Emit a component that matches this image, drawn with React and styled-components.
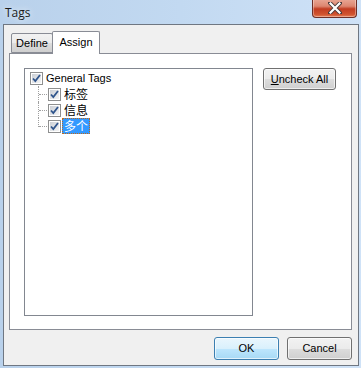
import React from "react";
import styled, { createGlobalStyle } from "styled-components";

const Global = createGlobalStyle`
  html, body { margin: 0; padding: 0; }
  body { width: 361px; height: 368px; overflow: hidden; background: #c4daf1; }
`;

const Window = styled.div`
  width: 361px;
  height: 368px;
  box-sizing: border-box;
  display: flex;
  flex-direction: column;
  background: linear-gradient(to right, #b9d1eb 0%, #c2d9f1 50%, #cfe2f7 100%);
  font-family: "Liberation Sans", Arial, sans-serif;
  font-size: 11px;
  color: #000;
`;

const TitleBar = styled.div`
  height: 24px;
  flex-shrink: 0;
  display: flex;
  align-items: flex-start;
  justify-content: space-between;
  padding-left: 5px;
  padding-right: 4px;
  box-sizing: border-box;
`;

const Title = styled.div`
  font-family: "Open Sans", "Noto Sans", sans-serif;
  font-size: 12px;
  line-height: 14px;
  margin-top: 6px;
  color: #1b1b1b;
  text-shadow: 0 0 6px rgba(255, 255, 255, 0.9);
`;

const CloseButton = styled.div`
  width: 45px;
  height: 19px;
  margin-top: -1px;
  box-sizing: border-box;
  border: 1px solid #6d2f27;
  border-top: none;
  border-radius: 0 0 4px 4px;
  background: linear-gradient(to bottom, #e9a896 0%, #dd8670 40%, #c23d22 55%, #d0532f 85%, #e67e55 100%);
  box-shadow: inset 0 0 0 1px rgba(255, 255, 255, 0.35);
  display: flex;
  align-items: center;
  justify-content: center;
`;

const Client = styled.div`
  height: 342px;
  flex-shrink: 0;
  margin: 0 2px 2px 3px;
  border: 1px solid #6f7782;
  background: #f0f0f0;
  display: flex;
  flex-direction: column;
  padding: 6px 6px 5px 5px;
  box-sizing: border-box;
`;

const TabStrip = styled.div`
  height: 22px;
  flex-shrink: 0;
  display: flex;
  align-items: flex-end;
  padding-left: 2px;
  position: relative;
  z-index: 1;
`;

const Tab = styled.div`
  box-sizing: border-box;
  width: ${(p) => p.$w}px;
  height: ${(p) => (p.$active ? "23px" : "20px")};
  margin-bottom: ${(p) => (p.$active ? "-1px" : "0")};
  margin-left: ${(p) => (p.$active ? "-1px" : "0")};
  padding-top: ${(p) => (p.$active ? "3px" : "2px")};
  text-align: center;
  border: 1px solid #898c95;
  border-bottom: ${(p) => (p.$active ? "none" : "1px solid #898c95")};
  background: ${(p) =>
    p.$active ? "#ffffff" : "linear-gradient(to bottom, #f2f2f2 0%, #ebebeb 50%, #dddddd 51%, #cfcfcf 100%)"};
  border-radius: 2px 2px 0 0;
  line-height: 14px;
  position: relative;
  z-index: ${(p) => (p.$active ? 2 : 1)};
`;

const Panel = styled.div`
  height: 277px;
  flex-shrink: 0;
  box-sizing: border-box;
  border: 1px solid #898c95;
  background: #ffffff;
  display: flex;
  align-items: flex-start;
  padding: 14px 0 0 14px;
  gap: 10px;
`;

const TreeBox = styled.div`
  width: 229px;
  height: 248px;
  box-sizing: border-box;
  border: 1px solid #828790;
  background: #fff;
  padding: 1px 0 0 0;
`;

const Row = styled.div`
  height: 16px;
  display: flex;
  align-items: center;
  padding-left: ${(p) => (p.$child ? "13px" : "5px")};
`;

const Connector = styled.div`
  width: 10px;
  height: 16px;
  position: relative;
  align-self: stretch;
  &::before {
    content: "";
    position: absolute;
    left: 0;
    top: 0;
    height: ${(p) => (p.$last ? "9px" : "16px")};
    border-left: 1px dotted #a0a0a0;
  }
  &::after {
    content: "";
    position: absolute;
    left: 1px;
    top: 8px;
    width: 8px;
    border-top: 1px dotted #a0a0a0;
  }
`;

const Box = styled.div`
  width: 13px;
  height: 13px;
  box-sizing: border-box;
  border: 1px solid #8e8f8f;
  background: #fff;
  padding: 1px;
  display: flex;
  flex-shrink: 0;
`;

const BoxInner = styled.div`
  flex: 1;
  background: linear-gradient(135deg, #cbcfd5 0%, #e4e6e9 60%, #f4f4f4 100%);
  display: flex;
  align-items: center;
  justify-content: center;
`;

const Label = styled.div`
  margin-left: 1px;
  height: 16px;
  box-sizing: border-box;
  padding: 0 2px;
  line-height: 16px;
  font-family: ${(p) =>
    p.$cjk ? '"Noto Sans CJK SC", "Liberation Sans", sans-serif' : '"Liberation Sans", Arial, sans-serif'};
  font-size: ${(p) => (p.$cjk ? "12px" : "11px")};
  white-space: nowrap;
  background: ${(p) => (p.$selected ? "#3399ff" : "transparent")};
  color: ${(p) => (p.$selected ? "#fff" : "#000")};
  outline: ${(p) => (p.$selected ? "1px dotted #c06a1a" : "none")};
  outline-offset: -1px;
`;

const Button = styled.div`
  box-sizing: border-box;
  width: ${(p) => p.$w}px;
  height: ${(p) => p.$h || 23}px;
  border: 1px solid ${(p) => (p.$default ? "#3c7fb1" : "#707070")};
  border-radius: 3px;
  background: ${(p) =>
    p.$default
      ? "linear-gradient(to bottom, #eaf6fd 0%, #d9f0fc 50%, #bee6fd 51%, #a7d9f5 100%)"
      : "linear-gradient(to bottom, #f2f2f2 0%, #ebebeb 50%, #dddddd 51%, #cfcfcf 100%)"};
  box-shadow: inset 0 0 0 1px rgba(255, 255, 255, 0.65);
  display: flex;
  align-items: center;
  justify-content: center;
  font-size: 11px;
  line-height: 13px;
  flex-shrink: 0;
`;

const Underline = styled.span`
  text-decoration: underline;
`;

const ButtonRow = styled.div`
  margin-top: 7px;
  flex-shrink: 0;
  display: flex;
  justify-content: flex-end;
  gap: 8px;
`;

const Check = () => (
  <svg width="9" height="9" viewBox="0 0 9 9">
    <path d="M1 4.5 L3.3 7 L8 1" fill="none" stroke="#30558c" strokeWidth="1.8" strokeLinejoin="miter" />
  </svg>
);

const CheckBox = () => (
  <Box>
    <BoxInner>
      <Check />
    </BoxInner>
  </Box>
);

const CloseX = () => (
  <svg width="14" height="12" viewBox="0 0 14 12">
    <path d="M2 1 L12 11 M12 1 L2 11" stroke="#4a3a3a" strokeWidth="4" strokeLinecap="square" />
    <path d="M2.5 1.5 L11.5 10.5 M11.5 1.5 L2.5 10.5" stroke="#ffffff" strokeWidth="2.2" strokeLinecap="square" />
  </svg>
);

const children = [
  { label: "标签" },
  { label: "信息" },
  { label: "多个", selected: true },
];

export default function App() {
  return (
    <>
      <Global />
      <Window>
        <TitleBar>
          <Title>Tags</Title>
          <CloseButton>
            <CloseX />
          </CloseButton>
        </TitleBar>
        <Client>
          <TabStrip>
            <Tab $w={42}>Define</Tab>
            <Tab $active $w={48}>Assign</Tab>
          </TabStrip>
          <Panel>
            <TreeBox>
              <Row>
                <CheckBox />
                <Label>General Tags</Label>
              </Row>
              {children.map((c, i) => (
                <Row $child key={c.label}>
                  <Connector $last={i === children.length - 1} />
                  <CheckBox />
                  <Label $child $cjk $selected={c.selected}>
                    {c.label}
                  </Label>
                </Row>
              ))}
            </TreeBox>
            <Button $w={73} $h={22}>
              <span>
                <Underline>U</Underline>ncheck All
              </span>
            </Button>
          </Panel>
          <ButtonRow>
            <Button $w={65} $default>
              OK
            </Button>
            <Button $w={65}>Cancel</Button>
          </ButtonRow>
        </Client>
      </Window>
    </>
  );
}
